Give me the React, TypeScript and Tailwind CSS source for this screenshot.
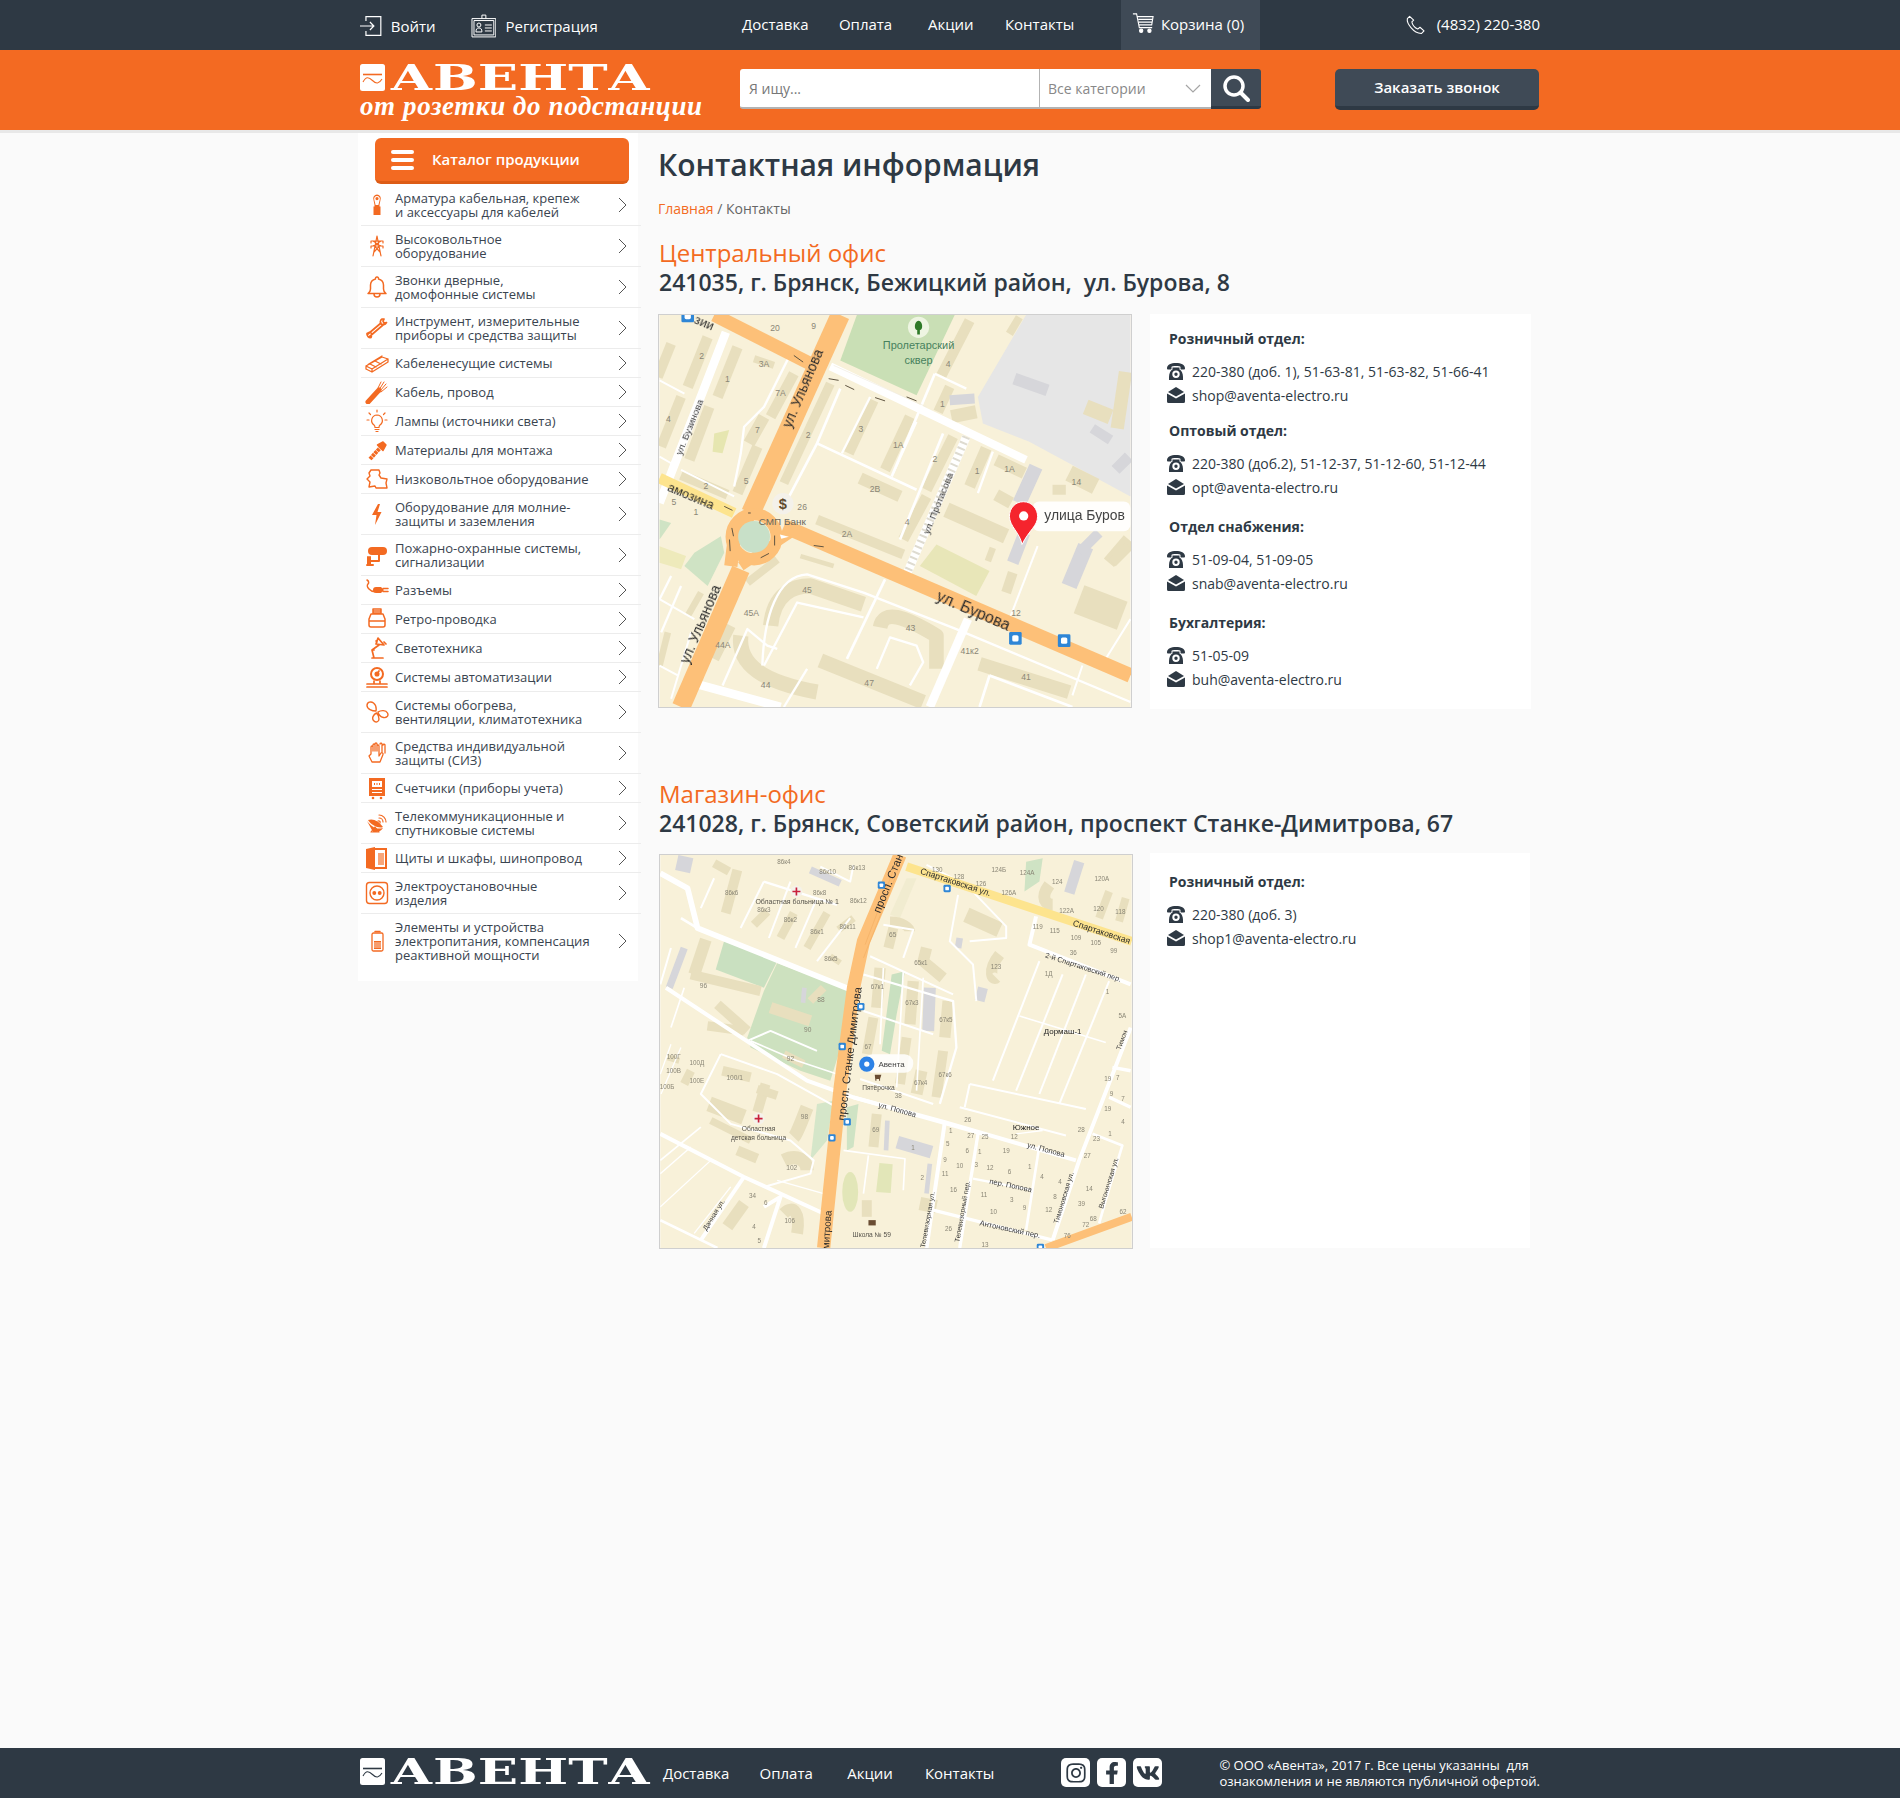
import React from 'react';
import { FaInstagram, FaFacebookF, FaVk } from 'react-icons/fa';

const O = '#f36a22';
type S = [string, number, string?];

const Paths = ({ items, color }: { items: S[]; color: string }) => (
  <>
    {items.map((it, i) => (
      <path key={i} d={it[0]} strokeWidth={it[1]} stroke={it[2] || color} fill="none" strokeLinejoin="round" />
    ))}
  </>
);

const T = ({ x, y, r = 0, s = 30, c = '#8a8676', t, w }: { x: number; y: number; r?: number; s?: number; c?: string; t: string; w?: number }) => (
  <text x={x} y={y} fontSize={s} fill={c} fontWeight={w} textAnchor="middle" transform={r ? `rotate(${r} ${x} ${y})` : undefined} style={{ fontFamily: '"Liberation Sans", sans-serif' }}>
    {t}
  </text>
);

const Bus = ({ x, y, s = 38 }: { x: number; y: number; s?: number }) => (
  <g>
    <rect x={x - s / 2} y={y - s / 2} width={s} height={s} rx={4} fill="#2f86d6" />
    <rect x={x - s / 4} y={y - s / 4} width={s / 2} height={s / 2} rx={s / 8} fill="#fff" />
  </g>
);

const Map1 = () => (
  <svg viewBox="25 43 1420 1182" className="block w-full h-full blur-[0.35px]">
    <rect x="25" y="43" width="1420" height="1182" fill="#f8f1d9" />
    <polygon points="1130,43 1445,43 1445,590 1260,490 1140,425 1000,370 985,290" fill="#e6e6e6" />
    <polygon points="620,43 915,43 800,285 570,180" fill="#c9dfb5" />
    <polygon points="810,800 860,735 1020,815 980,890" fill="#e8e6b8" />
    <polygon points="190,400 235,390 215,460 185,455" fill="#e6e6b0" />
    <polygon points="25,740 105,770 90,810 25,790" fill="#eeeabb" />
    <polygon points="25,660 60,670 25,720" fill="#cfe3c4" />
    <polygon points="130,760 210,710 220,760 170,860 100,800" fill="#cfe3c4" />
    <Paths
      color="#e8dfbe"
      items={[
        ['M60,130 L20,230', 30], ['M170,110 L110,260', 32], ['M260,140 L200,290', 32], ['M90,290 L30,440', 30], ['M175,320 L115,480', 32],
        ['M310,175 L370,195', 22], ['M430,220 L360,350', 32], ['M340,350 L295,430', 36], ['M320,440 L260,580', 32], ['M90,525 L230,585', 30],
        ['M540,250 L400,550', 28], ['M670,300 L595,460', 32], ['M780,350 L705,510', 32], ['M910,410 L830,570', 32], ['M830,590 L760,720', 32],
        ['M630,535 L750,590', 36], ['M500,660 L760,765', 30], ['M1010,445 L960,560', 34], ['M1040,480 L1125,520', 36], ['M1040,585 L1085,610', 36],
        ['M890,630 L1070,710', 46], ['M1260,520 L1340,560', 50], ['M960,60 L875,225', 32], ['M1110,50 L1080,100', 24], ['M900,260 L865,335', 30],
        ['M905,350 L980,335', 40], ['M360,980 C370,880 430,860 480,860 L640,915', 46], ['M690,985 C700,930 760,950 860,1010 L860,1110', 44],
        ['M270,1010 C260,1100 340,1150 500,1180', 46], ['M510,1085 L820,1210', 44], ['M990,1095 L1260,1180', 42], ['M1290,900 L1420,950', 90],
        ['M1090,820 L1070,880', 30], ['M1440,720 L1380,790', 40], ['M1030,745 L1015,785', 20], ['M290,850 L380,780', 24], ['M110,950 L150,880', 20], ['M190,1080 L240,980', 30],
        ['M450,770 L550,800', 14], ['M1210,570 L1250,570', 30], ['M50,1000 L25,1100', 20],
      ]}
    />
    <Paths
      color="#d6d6da"
      items={[['M1095,235 L1195,270', 36], ['M1160,500 L1110,610', 42], ['M1125,700 L1090,790', 36], ['M1310,740 L1260,860', 48], ['M1350,700 L1290,760', 30], ['M1440,470 L1400,510', 34], ['M1330,385 L1385,420', 30], ['M900,300 L975,295', 30]]}
    />
    <Paths color="#e8dfbe" items={[['M1310,320 L1385,350', 46], ['M1430,215 L1405,385', 40], ['M1440,740 L1390,790', 30]]} />
    <Paths
      color="#ffffff"
      items={[
        ['M225,95 L60,520 L25,610', 26], ['M540,198 L1130,480', 24], ['M855,220 L725,530', 8], ['M570,265 L500,430 L400,620', 8], ['M660,290 L575,460', 7],
        ['M500,430 L800,570', 8], ['M800,365 L730,520', 6], ['M880,400 L750,720', 8], ['M950,410 L770,825', 26], ['M1030,455 L985,580', 7], ['M415,170 L340,320 L280,380 L270,460 L250,560', 7],
        ['M25,240 L100,280', 6], ['M25,470 L60,490', 6], ['M90,510 L250,590', 6], ['M1165,740 L1080,960', 6], ['M705,840 L590,1080', 8], ['M955,960 L840,1225', 26],
        ['M335,1100 C340,950 380,830 470,825 L640,880 L920,990 L1445,1210', 7], ['M340,1100 L440,910 L640,955', 7], ['M470,1110 L400,1225', 7], ['M135,1155 L390,1225', 26],
        ['M680,1110 L720,1015 L800,1040 L820,1090 L780,1160', 7], ['M1020,1130 L1270,1225', 8], ['M1020,1130 L990,1225', 8], ['M1300,1100 L1270,1190', 6], ['M1445,960 L1370,1080', 6],
        ['M25,900 L130,960', 6], ['M90,860 L30,1000', 7], ['M60,830 L25,900', 7], ['M25,1100 L80,1130', 6], ['M120,1000 L60,1200', 6], ['M215,1160 L290,990 L350,1040 L380,1050', 7],
        ['M855,220 L950,265', 7],
      ]}
    />
    <path d="M950,410 L770,825" stroke="#dedbd0" strokeWidth="24" strokeDasharray="6 12" fill="none" />
    <path d="M550,195 L830,320" stroke="#f0ecdf" strokeWidth="2" fill="none" />
    <path d="M25,535 L250,640" stroke="#fde48e" strokeWidth="32" fill="none" />
    <Paths
      color="#fdc078"
      items={[
        ['M190,43 L480,190', 40], ['M570,43 L300,640', 58], ['M300,640 L250,720 L240,800', 40], ['M270,810 L90,1225', 56], ['M400,680 L1445,1130', 44], ['M270,800 L420,700', 30],
      ]}
    />
    <circle cx="310" cy="712" r="68" fill="none" stroke="#fdc078" strokeWidth="36" />
    <circle cx="310" cy="712" r="48" fill="#c8e0c8" />
    <path d="M388,705 L415,712 L392,718 Z" fill="#fff" />
    <g stroke="#5f5441" strokeWidth="3" fill="none">
      <path d="M430,165 L458,185 M535,235 L565,240 M585,255 L612,268 M675,292 L705,302 M800,302 L770,290 M490,738 L520,742 M372,738 L372,708 M330,775 L355,762 M238,755 L236,720 M248,710 L243,685 M300,640 L292,640 M220,620 L245,632" />
    </g>
    <circle cx="806" cy="80" r="32" fill="#eef5e2" />
    <path d="M806,60 C820,62 820,88 810,88 L810,102 L802,102 L802,88 C792,88 792,62 806,60 Z" fill="#2f7a28" />
    <T x={806} y={145} s={33} c="#47815d" t="Пролетарский" />
    <T x={806} y={190} s={33} c="#47815d" t="сквер" />
    <circle cx="397" cy="612" r="32" fill="#f4f1ea" />
    <T x={397} y={628} s={44} c="#5f4a2e" w={700} t="$" />
    <T x={395} y={676} s={30} c="#6a675c" t="СМП Банк" />
    <T x={455} y={632} s={26} t="26" />
    <T x={373} y={90} s={26} t="20" /><T x={490} y={85} s={26} t="9" /><T x={152} y={175} s={26} t="2" /><T x={340} y={200} s={26} t="3А" /><T x={230} y={245} s={26} t="1" />
    <T x={390} y={288} s={26} t="7А" /><T x={52} y={365} s={26} t="4" /><T x={320} y={400} s={26} t="7" /><T x={473} y={415} s={26} t="2" /><T x={632} y={395} s={26} t="3" />
    <T x={745} y={445} s={26} t="1А" /><T x={855} y={485} s={26} t="2" /><T x={286} y={552} s={26} t="5" /><T x={165} y={568} s={26} t="2" /><T x={675} y={578} s={26} t="2В" />
    <T x={983} y={522} s={26} t="1" /><T x={1080} y={516} s={26} t="1А" /><T x={1282} y={555} s={26} t="14" /><T x={772} y={675} s={26} t="4" /><T x={590} y={712} s={26} t="2А" />
    <T x={68} y={617} s={26} t="5" /><T x={135} y={645} s={26} t="1" /><T x={895} y={200} s={26} t="4" /><T x={878} y={320} s={26} t="1" /><T x={470} y={880} s={26} t="45" />
    <T x={302} y={952} s={26} t="45А" /><T x={782} y={997} s={26} t="43" /><T x={216} y={1046} s={26} t="44А" /><T x={345} y={1167} s={26} t="44" /><T x={657} y={1163} s={26} t="47" />
    <T x={960} y={1064} s={26} t="41к2" /><T x={1130} y={1144} s={26} t="41" /><T x={1100} y={950} s={26} t="12" />
    <T x={470} y={270} r={-67} s={42} c="#2b2b2b" t="ул. Ульянова" />
    <T x={160} y={980} r={-67} s={42} c="#2b2b2b" t="ул. Ульянова" />
    <T x={125} y={385} r={-68} s={30} c="#3a3a3a" t="ул. Бузинова" />
    <T x={875} y={615} r={-68} s={30} c="#3a3a3a" t="ул. Протасова" />
    <T x={115} y={600} r={23} s={38} c="#2b2b2b" t="амозина" />
    <T x={965} y={950} r={23} s={48} c="#2b2b2b" t="ул. Бурова" />
    <T x={155} y={78} r={23} s={38} c="#2b2b2b" t="зии" />
    <Bus x={110} y={46} /><Bus x={1098} y={1018} /><Bus x={1245} y={1025} />
    <rect x="1150" y="605" width="295" height="90" rx="20" fill="#fff" fillOpacity="0.9" />
    <text x="1185" y="662" fontSize="42" fill="#444" style={{ fontFamily: '"Liberation Sans", sans-serif' }}>улица Буров</text>
    <path d="M1122,606 C1150,606 1165,630 1165,650 C1165,680 1140,690 1118,735 C1112,700 1080,680 1080,650 C1080,625 1098,606 1122,606 Z" fill="#f5242d" stroke="#fff" strokeWidth="3" />
    <circle cx="1123" cy="649" r="14" fill="#fff" />
  </svg>
);

const Map2 = () => (
  <svg viewBox="28 40 1420 1184" className="block w-full h-full blur-[0.35px]">
    <rect x="28" y="40" width="1420" height="1184" fill="#f8f1d9" />
    <polygon points="220,300 380,360 340,440 195,385" fill="#c9e0c0" />
    <polygon points="380,365 600,450 590,560 540,720 450,690 300,620 290,590 340,450" fill="#cde1bf" />
    <polygon points="725,400 765,390 740,520 720,640 695,630" fill="#c9e0c0" />
    <polygon points="1125,150 1130,60 1180,50 1170,120" fill="#cfe3c4" />
    <polygon points="500,790 550,780 530,900 480,960" fill="#d5e6c9" />
    <polygon points="590,800 625,790 610,920 590,930" fill="#cfe3c4" />
    <ellipse cx="600" cy="1055" rx="24" ry="60" fill="#e2e6b8" />
    <polygon points="688,968 728,972 722,1058 678,1055" fill="#e2e6b8" />
    <polygon points="770,110 800,110 750,230 720,220" fill="#f1ecd0" />
    <Paths
      color="#e8dfbe"
      items={[
        ['M260,85 L225,215', 30], ['M190,65 L235,90', 26], ['M350,210 L310,250', 26], ['M430,215 L390,290', 26], ['M530,215 L470,320', 24], ['M610,230 L565,265', 22], ['M540,345 L570,365', 18],
        ['M165,295 L130,400', 36], ['M120,400 L330,450', 30], ['M200,490 L290,570', 30], ['M170,555 L280,570', 28], ['M360,500 L480,540', 34], ['M480,480 L520,440', 24], ['M400,640 L460,670', 24],
        ['M215,690 L300,710', 30], ['M175,790 L280,830', 46], ['M180,840 L300,900', 22], ['M345,730 L320,815', 30], ['M320,745 L380,765', 26], ['M470,800 C450,850 440,880 430,890', 40],
        ['M400,960 C440,940 470,960 470,990', 40], ['M260,930 L320,955', 30], ['M100,730 L120,690', 26], ['M50,650 L85,660', 18], ['M720,240 C760,240 780,260 780,270', 30], ['M730,260 L715,320', 30],
        ['M830,320 L820,360 L880,410', 34], ['M690,380 L680,500', 34], ['M790,420 L780,550', 34], ['M895,480 L885,590', 34], ['M670,530 L650,640', 30], ['M770,590 L750,730', 30], ['M880,630 L860,770', 30],
        ['M815,690 L800,760', 36], ['M680,820 L670,920', 30], ['M950,220 L1050,265', 46], ['M1050,340 C1010,390 1030,420 1040,410', 34], ['M1200,130 C1170,170 1190,190 1210,190', 36],
        ['M1380,150 L1350,230', 24], ['M1430,170 L1410,240', 24], ['M650,1080 L650,1130', 30], ['M810,1090 L860,1100', 40], ['M280,1090 L230,1160', 36], ['M400,1120 C430,1090 450,1120 440,1180', 36],
      ]}
    />
    <Paths color="#d6d6da" items={[['M105,45 L95,90', 46], ['M480,85 L570,125', 22], ['M100,320 L55,440', 22], ['M462,440 L458,485', 14], ['M840,440 L835,570', 36], ['M742,905 L845,935', 38], ['M712,840 L708,930', 14], ['M840,970 L830,1060', 14], ['M1000,440 L990,480', 30], ['M1290,60 L1260,155', 32], ['M930,290 L925,320', 20]]} />
    <Paths
      color="#ffffff"
      items={[
        ['M28,95 L110,140 L140,260 L600,445', 17], ['M90,230 L140,260', 8], ['M340,120 L560,190', 7], ['M340,120 L270,260', 6], ['M355,290 L420,120', 6], ['M435,320 L500,170', 6], ['M500,360 L600,230', 6],
        ['M150,200 L190,110', 6], ['M510,75 L600,120 L610,70', 6], ['M28,430 L60,320', 6], ['M45,440 L470,720 L610,770 L885,845 L1280,960', 12], ['M290,600 L360,570 L500,630', 6], ['M610,770 L1000,880', 12],
        ['M300,600 L440,660 L560,700', 5], ['M210,640 L380,700 L560,800', 6], ['M210,640 L150,760 L240,850 L420,900 L490,960 L480,1000 L340,1040', 6], ['M28,880 L280,1010 L520,1120', 12], ['M280,1010 L150,1200', 12],
        ['M28,1140 L200,1224', 8], ['M28,1000 L120,920', 4], ['M28,1100 L180,960', 4], ['M240,1040 L130,1180', 4], ['M150,860 L28,960', 5], ['M340,1100 L390,1070 L340,1224', 12],
        ['M640,400 L910,480 L920,620 L870,790', 7], ['M660,345 L910,460', 6], ['M640,510 L850,580', 6], ['M700,380 L690,610', 5], ['M760,390 L740,740', 5], ['M820,410 L800,750', 5], ['M630,715 L850,790', 6],
        ['M700,250 L790,265 L760,350', 6], ['M830,70 L950,130 L1070,255 L1070,290 L960,300', 6], ['M925,160 L900,300 L970,370 L980,480', 6], ['M1160,225 L1140,310 L1445,430', 12], ['M1170,360 L1030,720', 6], ['M1310,400 L1170,760', 6],
        ['M1380,420 L1230,790', 6], ['M1240,400 L1100,750', 6], ['M1110,525 L1370,605', 5], ['M960,730 L1310,805', 6], ['M960,730 L945,800', 6], ['M930,800 L1250,885', 6], ['M1445,560 L1290,960 L1210,1200', 12],
        ['M885,845 L830,1224', 12], ['M985,880 L930,1224', 10], ['M1170,915 L1130,1170', 8], ['M970,1015 L1150,1050', 7], ['M850,1110 L1210,1200', 10], ['M580,930 L765,955 L760,1050', 5], ['M655,945 L640,1060', 5],
        ['M1330,880 L1420,915 L1370,1080 L1350,1150', 8], ['M1445,690 L1390,680', 10], ['M1380,770 L1445,800', 10], ['M100,440 L60,560', 5], ['M28,700 L60,610', 4], ['M30,760 L90,620', 4], ['M380,1020 L520,1060', 4],
        ['M1180,870 L1100,880', 4],
      ]}
    />
    <path d="M770,75 L1448,300" stroke="#fde48e" strokeWidth="26" fill="none" />
    <path d="M750,40 L640,300 L610,440 L570,740 L520,1224" stroke="#fdc078" strokeWidth="40" fill="none" strokeLinejoin="round" />
    <path d="M740,60 L645,310 M735,110 L640,350" stroke="#f3ae62" strokeWidth="2" fill="none" />
    <path d="M1190,1224 L1448,1130" stroke="#fdc078" strokeWidth="24" fill="none" />
    <path d="M1500,1000" />
    <T x={728} y={288} s={20} t="65" /><T x={400} y={68} s={19} t="86к4" /><T x={532} y={96} s={19} t="86к10" /><T x={620} y={86} s={19} t="86к13" /><T x={243} y={160} s={19} t="86к6" /><T x={508} y={160} s={19} t="86к8" />
    <T x={625} y={184} s={19} t="86к12" /><T x={340} y={212} s={19} t="86к3" /><T x={420} y={242} s={19} t="86к2" /><T x={500} y={278} s={19} t="86к1" /><T x={592} y={262} s={19} t="86к11" /><T x={542} y={358} s={19} t="86к5" />
    <T x={158} y={440} s={20} t="96" /><T x={512} y={482} s={20} t="88" /><T x={472} y={573} s={20} t="90" /><T x={420} y={662} s={20} t="92" /><T x={252} y={717} s={20} t="100/1" /><T x={138} y={672} s={19} t="100Д" />
    <T x={68} y={655} s={19} t="100Г" /><T x={68} y={697} s={19} t="100В" /><T x={138} y={728} s={19} t="100Е" /><T x={48} y={745} s={19} t="100Б" /><T x={462} y={835} s={20} t="98" /><T x={424} y={989} s={20} t="102" />
    <T x={306} y={1072} s={19} t="34" /><T x={346} y={1093} s={19} t="6" /><T x={418} y={1150} s={19} t="106" /><T x={310} y={1168} s={19} t="4" /><T x={326} y={1210} s={19} t="5" />
    <T x={682} y={445} s={19} t="67к1" /><T x={786} y={493} s={19} t="67к3" /><T x={888} y={542} s={19} t="67к5" /><T x={654} y={625} s={19} t="67" /><T x={812} y={732} s={19} t="67к4" /><T x={886} y={710} s={19} t="67к6" />
    <T x={813} y={372} s={19} t="65к1" /><T x={745} y={771} s={19} t="38" /><T x={677} y={876} s={19} t="69" /><T x={789} y={930} s={19} t="1" /><T x={817} y={1020} s={19} t="2" /><T x={1039} y={384} s={19} t="123" />
    <T x={862} y={90} s={19} t="130" /><T x={928} y={112} s={19} t="128" /><T x={994} y={132} s={19} t="126" /><T x={1078} y={160} s={19} t="126А" /><T x={1048} y={90} s={19} t="124Б" /><T x={1133} y={100} s={19} t="124А" /><T x={1224} y={126} s={19} t="124" />
    <T x={1252} y={216} s={19} t="122А" /><T x={1348} y={210} s={19} t="120" /><T x={1414} y={218} s={19} t="118" /><T x={1358} y={118} s={19} t="120А" /><T x={1165} y={264} s={19} t="119" /><T x={1216} y={276} s={19} t="115" />
    <T x={1280} y={296} s={19} t="109" /><T x={1340} y={312} s={19} t="105" /><T x={1394} y={334} s={19} t="99" /><T x={1272} y={342} s={19} t="36" /><T x={1198} y={404} s={19} t="1Д" /><T x={1375} y={460} s={19} t="1" /><T x={1420} y={530} s={19} t="5А" />
    <T x={954} y={845} s={19} t="26" /><T x={903} y={877} s={19} t="1" /><T x={963} y={892} s={19} t="27" /><T x={1006} y={895} s={19} t="25" /><T x={1094} y={896} s={19} t="12" /><T x={1296} y={875} s={19} t="28" /><T x={1342} y={902} s={19} t="23" />
    <T x={894} y={918} s={19} t="5" /><T x={953} y={938} s={19} t="6" /><T x={990} y={941} s={19} t="1" /><T x={1070} y={938} s={19} t="19" /><T x={1314} y={953} s={19} t="27" /><T x={886} y={965} s={19} t="9" /><T x={930} y={984} s={19} t="10" />
    <T x={980} y={980} s={19} t="3" /><T x={1021} y={988} s={19} t="12" /><T x={1080} y={1000} s={19} t="6" /><T x={1141} y={987} s={19} t="1" /><T x={1178} y={1016} s={19} t="4" /><T x={1232} y={1030} s={19} t="4" /><T x={1320} y={1052} s={19} t="14" />
    <T x={886} y={1008} s={19} t="11" /><T x={911} y={1056} s={19} t="16" /><T x={1003} y={1070} s={19} t="11" /><T x={1087} y={1086} s={19} t="3" /><T x={1217} y={1075} s={19} t="8" /><T x={1297} y={1097} s={19} t="39" /><T x={1125} y={1110} s={19} t="9" />
    <T x={1198} y={1116} s={19} t="12" /><T x={1032} y={1122} s={19} t="10" /><T x={1422} y={1122} s={19} t="62" /><T x={1332} y={1144} s={19} t="68" /><T x={1310} y={1162} s={19} t="72" /><T x={896} y={1172} s={19} t="26" /><T x={1006} y={1220} s={19} t="13" /><T x={1254} y={1193} s={19} t="76" />
    <T x={1376} y={720} s={19} t="19" /><T x={1406} y={718} s={19} t="7" /><T x={1387} y={766} s={19} t="9" /><T x={1422} y={780} s={19} t="7" /><T x={1376} y={810} s={19} t="19" /><T x={1422} y={850} s={19} t="4" /><T x={1383} y={888} s={19} t="1" />
    <T x={725} y={130} r={-68} s={34} c="#2b2b2b" t="просп. Стан" />
    <T x={610} y={640} r={-83} s={34} c="#2b2b2b" t="просп. Станке Димитрова" />
    <T x={540} y={1170} r={-86} s={30} c="#2b2b2b" t="митрова" />
    <T x={915} y={130} r={18} s={26} c="#2b2b2b" t="Спартаковская ул." />
    <T x={1355} y={280} r={18} s={26} c="#2b2b2b" t="Спартаковская" />
    <T x={1300} y={385} r={18} s={22} c="#3a3a3a" t="2-й Спартаковский пер." />
    <T x={740} y={815} r={15} s={23} c="#3a3a3a" t="ул. Попова" />
    <T x={1188} y={935} r={15} s={23} c="#3a3a3a" t="ул. Попова" />
    <T x={1082} y={1043} r={12} s={23} c="#3a3a3a" t="пер. Попова" />
    <T x={1080} y={1175} r={12} s={23} c="#3a3a3a" t="Антоновский пер." />
    <T x={195} y={1128} r={-58} s={21} c="#3a3a3a" t="Дачная ул." />
    <T x={945} y={1115} r={-80} s={21} c="#3a3a3a" t="Телевизорный пер." />
    <T x={840} y={1140} r={-80} s={21} c="#3a3a3a" t="Телевизорная ул." />
    <T x={1250} y={1075} r={-73} s={21} c="#3a3a3a" t="Тимоновская ул." />
    <T x={1385} y={1030} r={-73} s={21} c="#3a3a3a" t="Выгоничская ул." />
    <T x={1425} y={600} r={-70} s={21} c="#3a3a3a" t="Тимон" />
    <T x={1240} y={580} s={24} c="#222" t="Дормаш-1" />
    <T x={1130} y={869} s={24} c="#222" t="Южное" />
    <circle cx="438" cy="150" r="18" fill="#f5f2ea" />
    <path d="M438,138 V162 M426,150 H450" stroke="#c8203c" strokeWidth="5" />
    <T x={440} y={188} s={21} c="#55524a" t="Областная больница № 1" />
    <circle cx="324" cy="834" r="18" fill="#f5f2ea" />
    <path d="M324,822 V846 M312,834 H336" stroke="#c8203c" strokeWidth="5" />
    <T x={324} y={873} s={20} c="#55524a" t="Областная" />
    <T x={324} y={898} s={20} c="#55524a" t="детская больница" />
    <T x={685} y={747} s={20} c="#55524a" t="Пятёрочка" />
    <T x={665} y={1190} s={20} c="#55524a" t="Школа № 59" />
    <path d="M655,1140 h22 v16 h-22 z" fill="#6a4d33" />
    <path d="M674,702 h20 l-4,12 v6 h-3 v-5 h-8 v5 h-3 z" fill="#6a4d33" />
    <Bus x={694} y={131} s={22} /><Bus x={892} y={141} s={22} /><Bus x={632} y={497} s={22} /><Bus x={576} y={617} s={22} /><Bus x={591} y={844} s={22} /><Bus x={545} y={892} s={22} /><Bus x={1173} y={1222} s={22} />
    <rect x="640" y="640" width="150" height="56" rx="26" fill="#fff" fillOpacity="0.85" />
    <text x="685" y="678" fontSize="24" fill="#444" style={{ fontFamily: '"Liberation Sans", sans-serif' }}>Авента</text>
    <circle cx="650" cy="670" r="23" fill="#2d82e6" />
    <circle cx="650" cy="670" r="8" fill="#fff" />
  </svg>
);

const Mark = ({ line }: { line: string }) => (
  <svg viewBox="0 0 25 27" className="w-[25px] h-[27px] shrink-0">
    <rect width="25" height="27" rx="2.5" fill="#fff" />
    <path d="M3 10.5 H22" stroke={line} strokeWidth="1.6" />
    <path d="M3 18 C6 12 9 13 12.5 16.5 C16 20 19 20 22 15" stroke={line} strokeWidth="1.1" fill="none" />
  </svg>
);

const LogoWord = () => (
  <span className="block origin-left scale-x-[1.47] text-[36px] leading-[27px] font-bold text-white whitespace-nowrap [font-family:'DejaVu_Serif',serif]">АВЕНТА</span>
);

const ic = (c: React.ReactNode, fill = false) => (
  <svg viewBox="0 0 24 24" className="w-[24px] h-[24px]" fill={fill ? O : 'none'} stroke={fill ? 'none' : O} strokeWidth={fill ? 0 : 1.5} strokeLinecap="round" strokeLinejoin="round">
    {c}
  </svg>
);

const icons: React.ReactNode[] = [
  ic(<><path fillRule="evenodd" d="M12 1.5a4 4 0 0 1 3.5 5.5L14.5 12v1.5h1V22h-7v-8.5h1V12L8.500 7A4 4 0 0 1 12 1.500Zm0 2.500a1.600 1.600 0 1 0 0 3.200 1.600 1.600 0 0 0 0-3.200Zm0 -1a2.800 2.800 0 0 0-2.700 3.800L10.600 12h2.800l1.300-5.200A2.800 2.800 0 0 0 12 3Z" /></>, true),
  ic(<path d="M12 2 L8 22 M12 2 L16 22 M6 7 H18 M8 7 L16 12 M16 7 L8 12 M6 12 H18 M9.500 12 L15 18 M14.500 12 L9 18 M6 7v2 M18 7v2 M6 12v2 M18 12v2" strokeWidth="1.2" />),
  ic(<path d="M12 2a1.500 1.500 0 0 1 1.500 2A6.500 6.500 0 0 1 18.500 10v4c0 2 1 3.500 2.500 4.500H3C4.500 17.500 5.500 16 5.500 14v-4A6.500 6.500 0 0 1 10.500 4 1.500 1.500 0 0 1 12 2ZM9 19a3 3 0 0 0 6 0" />),
  ic(<path d="M3 18 L16 7 M4 21 L18 9 M17 3 C15 4 15 7 16 8 C17.500 9 20 9 21.500 6.500 L19 7 L18 5 L19 3 Z M2 17.500 L5 16 L7 18 L6 21.500 C4 22 1.500 20 2 17.500 Z" strokeWidth="1.700" />),
  ic(<path d="M1 15 L17 6 L23 8 L7 18 Z M1 18 L7 21 L23 11 M1 15 V18 M7 18 V21 M23 8 V11 M5 13 L11 16 M10 10 L16 13 M3 13.500 L17 5" strokeWidth="1.300" />),
  ic(<><path d="M3 22 L14 10" strokeWidth="5" /><path d="M14 10 L19 2 M15 11 L21 4 M16 12 L22 7 M13 8 L16 2" strokeWidth="1" /></>),
  ic(<path d="M12 6a5.500 5.500 0 0 0-3 10c.800.700 1 1.500 1 2.500h4c0-1 .200-1.800 1-2.500a5.500 5.500 0 0 0-3-10ZM10 20.500h4M11 22.500h2M12 1v2M4 4l1.500 1.500M20 4l-1.500 1.500M2 11h2M20 11h2" strokeWidth="1.200" />),
  ic(<><path d="M5 21 L15 10" strokeWidth="4" strokeDasharray="3 .6" strokeLinecap="butt" /><path d="M12.500 7 L18 12.500 L21 7 L18 4 Z" fill={O} /></>),
  ic(<path d="M6 3h8l1 3-1 2 2 3 6 1-1 4 1 5H11l-1-2-6 1 1-5-3-3 3-3-1-3Z" strokeWidth="1.400" />),
  ic(<path d="M13 2 L7 13 L11.500 13 L10 23 L16.500 10 L12.500 10 L15 2 Z" stroke="none" fill={O} />, true),
  ic(<><path d="M7 4h11a4 4 0 0 1 0 8H7a4 4 0 0 1 0-8Z" fill={O} stroke="none" /><path d="M14 12v6H5M5 14v8M2 22h6M3 14v8" stroke={O} strokeWidth="2" fill="none" /></>),
  ic(<><path d="M2 2c2 1 2 3 1 4s-1 3 1 5 5 3 7 2" fill="none" stroke={O} strokeWidth="1.500" /><path d="M11 9h5l3 3-3 3h-5a3 3 0 0 1 0-6Z" /><path d="M18 10.500h5M18 13.500h5" fill="none" stroke={O} strokeWidth="1.500" /></>, true),
  ic(<path d="M8 2h8v4H8ZM6 7h12l2 5v6a2 2 0 0 1-2 2H6a2 2 0 0 1-2-2v-6ZM4 14h16M9 4h6" />),
  ic(<path d="M7 22h11M9 22L7 14l7-5M7 14l2 0M13 2l6 7-8-1Z M12 6l-1-1M19 6l2 2" fill="none" strokeWidth="1.700" />),
  ic(<><circle cx="12" cy="9" r="6" strokeWidth="2" /><circle cx="12" cy="9" r="1.800" fill={O} /><path d="M12 9l2-3M9 16v3M15 16v3M2 19h20M2 22h20" strokeWidth="1.700" /></>),
  ic(<path d="M11 11C7 11 2 9 2 5.500S6 1 8.500 3s3 5 2.500 8ZM13 12c3-2 8-2 9.500 1s-1 5-4 4.500-5-3-5.500-5.500ZM11.500 13c-3 1.500-5 5-3 7.500s5.500 1.500 5.500-1.500-1-4.500-2.500-6Z" strokeWidth="1.400" />),
  ic(<path d="M6 13 V6a1 1 0 0 1 2 0v4V4a1 1 0 0 1 2 0v6V3a1 1 0 0 1 2 0v7V5a1 1 0 0 1 2 0v10l2-3a1.300 1.300 0 0 1 2 1.500L15 21H7L4 15l2-2Z M15 3a1 1 0 0 1 2 .5V11M18 4a1 1 0 0 1 2 .5V12" strokeWidth="1.300" />),
  ic(<><path fillRule="evenodd" d="M4 2h16v18H4ZM7 5v6h10V5ZM7 13v1h10v-1ZM7 16v1h10v-1Z" /><circle cx="8" cy="22" r="1.300" /><circle cx="16" cy="22" r="1.300" /><path d="M9 7h1v2H9ZM11.500 7h1v2h-1ZM14 7h1v2h-1Z" /></>, true),
  ic(<><path d="M2 10c5 6 9 9 16 7-2 3-5 4-7 4l-3 0z M3 9C8 7 14 10 18 16c-4 2-12-2-15-7Z" fill={O} stroke="none" /><path d="M6 21h8l-4-5ZM14 4a7 7 0 0 1 7 7M14 7a4 4 0 0 1 4 4M13 10a1.500 1.500 0 0 1 2 2" fill="none" stroke={O} strokeWidth="1.200" /></>),
  ic(<><path fillRule="evenodd" d="M1 3 L10 1 V24 L1 22 Z" /><path fillRule="evenodd" d="M10 2h12v21H10v-2h10V4H10Z" /><path d="M13 7h6v12h-6Z" fillOpacity=".6" /></>, true),
  ic(<><rect x="1.500" y="1.500" width="21" height="21" rx="3" strokeWidth="1.400" /><circle cx="12" cy="12" r="7" strokeWidth="1.400" /><circle cx="9.300" cy="12" r="1.200" fill={O} /><circle cx="14.700" cy="12" r="1.200" fill={O} /></>),
  ic(<><rect x="7" y="4" width="11" height="18" rx="1.500" strokeWidth="1.300" /><path d="M10 2.500h5" strokeWidth="1.500" /><path d="M9 12h7v8H9Z" fill={O} stroke="none" /><path d="M9 14h7M9 16h7M9 18h7" stroke="#fff" strokeWidth=".7" /></>),
];

const cats: string[][] = [
  ['Арматура кабельная, крепеж', 'и аксессуары для кабелей'],
  ['Высоковольтное', 'оборудование'],
  ['Звонки дверные,', 'домофонные системы'],
  ['Инструмент, измерительные', 'приборы и средства защиты'],
  ['Кабеленесущие системы'],
  ['Кабель, провод'],
  ['Лампы (источники света)'],
  ['Материалы для монтажа'],
  ['Низковольтное оборудование'],
  ['Оборудование для молние-', 'защиты и заземления'],
  ['Пожарно-охранные системы,', 'сигнализации'],
  ['Разъемы'],
  ['Ретро-проводка'],
  ['Светотехника'],
  ['Системы автоматизации'],
  ['Системы обогрева,', 'вентиляции, климатотехника'],
  ['Средства индивидуальной', 'защиты (СИЗ)'],
  ['Счетчики (приборы учета)'],
  ['Телекоммуникационные и', 'спутниковые системы'],
  ['Щиты и шкафы, шинопровод'],
  ['Электроустановочные', 'изделия'],
  ['Элементы и устройства', 'электропитания, компенсация', 'реактивной мощности'],
];

const PhoneIco = () => (
  <svg viewBox="0 0 18 18" className="w-[18px] h-[18px] shrink-0" fill="#2e3944">
    <path d="M0 6.500C0 2.500 4 1 9 1s9 1.500 9 5.500c0 .8-.5 1-1.200 1h-2.300c-.7 0-1-.4-1-1V5c0-.6-2-1-4.500-1S4.500 4.400 4.500 5v1.500c0 .6-.3 1-1 1H1.200C.5 7.500 0 7.300 0 6.500Z" />
    <path fillRule="evenodd" d="M5.500 5.500h7v2c2 1 3.500 4 3.500 7.500v3H2v-3c0-3.500 1.500-6.500 3.500-7.500ZM9 8.500a3.700 3.700 0 1 0 0 7.400 3.700 3.700 0 0 0 0-7.400Zm0 2a1.700 1.700 0 1 1 0 3.400 1.700 1.700 0 0 1 0-3.400Z" />
  </svg>
);
const MailIco = () => (
  <svg viewBox="0 0 18 16" className="w-[18px] h-[16px] shrink-0" fill="#2e3944">
    <path d="M9 0 L17 5 L9 9.500 L1 5 Z" />
    <path d="M0 6.500 L9 11.500 L18 6.500 V14.500 a1.500 1.500 0 0 1-1.500 1.500 H1.500 A1.500 1.500 0 0 1 0 14.500 Z" />
  </svg>
);

const Dept = ({ cls, title, phone, mail }: { cls: string; title: string; phone: string; mail: string }) => (
  <div className={cls}>
    <div className="pl-[19px] text-[14px] leading-[20px] font-bold text-[#2e3944]">{title}</div>
    <div className="mt-[10px] pl-[17px] flex items-center gap-[7px] h-[24px] text-[14px] text-[#2e3944]"><PhoneIco />{phone}</div>
    <div className="pl-[17px] flex items-center gap-[7px] h-[24px] text-[14px] text-[#2e3944]"><MailIco />{mail}</div>
  </div>
);

const navCls = 'text-[15px] text-white';

export default function App() {
  return (
    <div className="min-h-[1798px] flex flex-col bg-[#fafafa] [font-family:'Open_Sans',sans-serif]">
      <header className="h-[50px] bg-[#2e3944] shrink-0">
        <div className="w-[1180px] mx-auto h-full flex items-center relative text-white text-[15px]">
          <svg viewBox="0 0 22 22" className="w-[22px] h-[22px] mt-[2px]" fill="none" stroke="#fff" strokeWidth="1.200"><path d="M6 6V1.500H21V20.500H6V16M0 11H14M10 7l4 4-4 4" /></svg>
          <span className="ml-[9px] mt-[2px]">Войти</span>
          <svg viewBox="0 0 26 24" className="ml-[35px] w-[26px] h-[24px] mt-[1px]" fill="none" stroke="#fff" strokeWidth="1"><path d="M1 4.500h24v18.500H1ZM3 6.500h20v14.500H3ZM11 4.500V1h4v3.500M5 18c0-3 1-4 3-4s3 1 3 4ZM14 11h7M14 14h7M14 17h7" /><circle cx="8" cy="11" r="2" /></svg>
          <span className="ml-[9px] mt-[2px]">Регистрация</span>
          <nav className="ml-[144px] flex -mt-px">
            <a className="w-[97px]">Доставка</a>
            <a className="w-[89px]">Оплата</a>
            <a className="w-[77px]">Акции</a>
            <a className="w-[116px]">Контакты</a>
          </nav>
          <div className="h-full w-[140px] bg-[#3f4a56] flex items-center pl-[11px] gap-[7px]">
            <svg viewBox="0 0 24 24" className="w-[22px] h-[24px] -mt-[4px]" fill="none" stroke="#fff" strokeWidth="1.200"><path d="M1 2h4l3 15h14M6 5h17l-1.500 9H8M7 8h15M7.500 11h14" /><circle cx="10" cy="20.500" r="1.800" fill="#fff" /><circle cx="19" cy="20.500" r="1.800" fill="#fff" /></svg>
            <span className="-mt-px">Корзина (0)</span>
          </div>
          <svg viewBox="0 0 22 22" className="ml-[146px] w-[20px] h-[20px]" fill="none" stroke="#fff" strokeWidth="1.200" strokeLinejoin="round"><path d="M4 1.500 L1.500 4 C0.500 9 8 20 17 20.500 L20 17.500 L15.500 13.500 L13 15.500 C10 14 7 10.500 6.500 7.500 L8.500 5.500 Z" /></svg>
          <span className="ml-[11px] -mt-px whitespace-nowrap">(4832) 220-380</span>
        </div>
      </header>

      <div className="h-[80px] bg-[#f36a22] shrink-0">
        <div className="w-[1180px] mx-auto h-full flex relative">
          <div className="w-[380px] pt-[14px]">
            <div className="flex">
              <Mark line={O} />
              <div className="ml-[5px] pt-0"><LogoWord /></div>
            </div>
            <div className="-mt-px text-[27px] leading-[32px] italic font-bold text-white whitespace-nowrap tracking-[0.6px] [font-family:'Liberation_Serif',serif]">от розетки до подстанции</div>
          </div>
          <div className="mt-[19px] h-[40px] flex">
            <div className="w-[300px] h-full bg-white rounded-l-[3px] border-b-2 border-[#b3b3b3] border-r border-r-[#b3b3b3] pl-[9px] flex items-center text-[14px] text-[#777]">Я ищу...</div>
            <div className="w-[171px] h-full bg-white border-b-2 border-[#b3b3b3] pl-[8px] pr-[10px] flex items-center justify-between text-[14px] text-[#888]">
              Все категории
              <svg viewBox="0 0 16 9" className="w-[16px] h-[9px]" fill="none" stroke="#a5a5a5" strokeWidth="1.200"><path d="M1 1l7 7 7-7" /></svg>
            </div>
            <div className="w-[50px] h-full bg-[#3f4a56] border-b-[3px] border-[#2e3944] rounded-r-[3px] flex items-center justify-center">
              <svg viewBox="0 0 28 28" className="w-[28px] h-[28px]" fill="none" stroke="#fff"><circle cx="12" cy="12" r="9" strokeWidth="3.500" /><path d="M18.500 18.500 L26 26" strokeWidth="4" strokeLinecap="round" /></svg>
            </div>
          </div>
          <button className="ml-[74px] mt-[19px] w-[204px] h-[41px] bg-[#3f4a56] border-b-[4px] border-[#2e3944] rounded-[5px] text-[15px] font-semibold text-white">Заказать звонок</button>
        </div>
      </div>
      <div className="h-[3px] bg-[#e8e8e8] shrink-0" />

      <main className="flex-1">
        <div className="w-[1180px] mx-auto flex items-start">
          <aside className="-ml-[2px] w-[280px] bg-white pt-[5px] pb-[13px] shrink-0">
            <div className="ml-[17px] w-[254px] h-[46px] bg-[#f36a22] border-b-[3px] border-[#dd5c16] rounded-[6px] flex items-center text-white text-[15px] font-semibold mb-px">
              <div className="ml-[16px] w-[23px] flex flex-col gap-[4px]">
                <i className="block h-[4px] bg-white rounded-[2px]" />
                <i className="block h-[4px] bg-white rounded-[2px]" />
                <i className="block h-[4px] bg-white rounded-[2px]" />
              </div>
              <span className="ml-[18px]">Каталог продукции</span>
            </div>
            {cats.map((lines, i) => (
              <div key={i} className={`ml-[3px] -mr-[3px] flex items-center py-[6px] text-[13px] leading-[14px] text-[#3a4450] ${i < cats.length - 1 ? 'border-b border-[#ececec]' : ''}`}>
                <div className="w-[32px] h-[14px] flex items-center justify-center shrink-0">{icons[i]}</div>
                <div className="ml-[2px] flex-1 whitespace-nowrap">
                  {lines.map((l, j) => (<div key={j}>{l}</div>))}
                </div>
                <svg viewBox="0 0 9 16" className="w-[9px] h-[16px] mr-[14px] shrink-0" fill="none" stroke="#555" strokeWidth="1"><path d="M1 1l7 7-7 7" /></svg>
              </div>
            ))}
          </aside>

          <section className="ml-[20px] w-[873px] shrink-0">
            <h1 className="mt-[12px] text-[30px] leading-[40px] font-semibold text-[#2e3944]">Контактная информация</h1>
            <div className="mt-[14px] text-[14px] leading-[20px] text-[#666]"><span className="text-[#f36a22]">Главная</span> / Контакты</div>
            <h2 className="mt-[19px] ml-px text-[24px] leading-[30px] text-[#f36a22]">Центральный офис</h2>
            <div className="ml-px text-[23px] leading-[28px] font-semibold text-[#2e3944] whitespace-pre">241035, г. Брянск, Бежицкий район,  ул. Бурова, 8</div>
            <div className="mt-[18px] flex gap-[18px] items-start">
              <div className="w-[474px] h-[394px] border border-[#cfcfcf] shrink-0"><Map1 /></div>
              <div className="w-[381px] h-[395px] bg-white pt-[15px]">
                <Dept cls="" title="Розничный отдел:" phone="220-380 (доб. 1), 51-63-81, 51-63-82, 51-66-41" mail="shop@aventa-electro.ru" />
                <Dept cls="mt-[14px]" title="Оптовый отдел:" phone="220-380 (доб.2), 51-12-37, 51-12-60, 51-12-44" mail="opt@aventa-electro.ru" />
                <Dept cls="mt-[18px]" title="Отдел снабжения:" phone="51-09-04, 51-09-05" mail="snab@aventa-electro.ru" />
                <Dept cls="mt-[18px]" title="Бухгалтерия:" phone="51-05-09" mail="buh@aventa-electro.ru" />
              </div>
            </div>
            <h2 className="mt-[70px] ml-px text-[24px] leading-[30px] text-[#f36a22]">Магазин-офис</h2>
            <div className="ml-px text-[23px] leading-[28px] font-semibold text-[#2e3944] whitespace-nowrap">241028, г. Брянск, Советский район, проспект Станке-Димитрова, 67</div>
            <div className="mt-[16px] ml-px flex gap-[17px] items-start">
              <div className="mt-px w-[474px] h-[395px] border border-[#cfcfcf] shrink-0"><Map2 /></div>
              <div className="w-[380px] h-[395px] bg-white pt-[19px]">
                <Dept cls="" title="Розничный отдел:" phone="220-380 (доб. 3)" mail="shop1@aventa-electro.ru" />
              </div>
            </div>
          </section>
        </div>
      </main>

      <footer className="h-[50px] bg-[#2e3944] shrink-0">
        <div className="w-[1180px] mx-auto h-full flex relative items-center">
          <div className="w-[304px] flex items-center -mt-[3px]">
            <Mark line="#2e3944" />
            <div className="ml-[5px]"><LogoWord /></div>
          </div>
          <a className={`${navCls} w-[97px]`}>Доставка</a>
          <a className={`${navCls} w-[88px]`}>Оплата</a>
          <a className={`${navCls} w-[78px]`}>Акции</a>
          <a className={`${navCls} w-[137px]`}>Контакты</a>
          <div className="flex gap-[7px] -mt-px">
            <span className="w-[29px] h-[29px] bg-white rounded-[5px] flex items-center justify-center text-[#2e3944] text-[22px]"><FaInstagram /></span>
            <span className="w-[29px] h-[29px] bg-white rounded-[5px] flex items-center justify-center text-[#2e3944] text-[22px]"><FaFacebookF /></span>
            <span className="w-[29px] h-[29px] bg-white rounded-[5px] flex items-center justify-center text-[#2e3944] text-[24px]"><FaVk /></span>
          </div>
          <div className="ml-[57px] text-[13px] leading-[16px] text-white whitespace-pre">{'© ООО «Авента», 2017 г. Все цены указанны  для\nознакомления и не являются публичной офертой.'}</div>
        </div>
      </footer>
    </div>
  );
}
